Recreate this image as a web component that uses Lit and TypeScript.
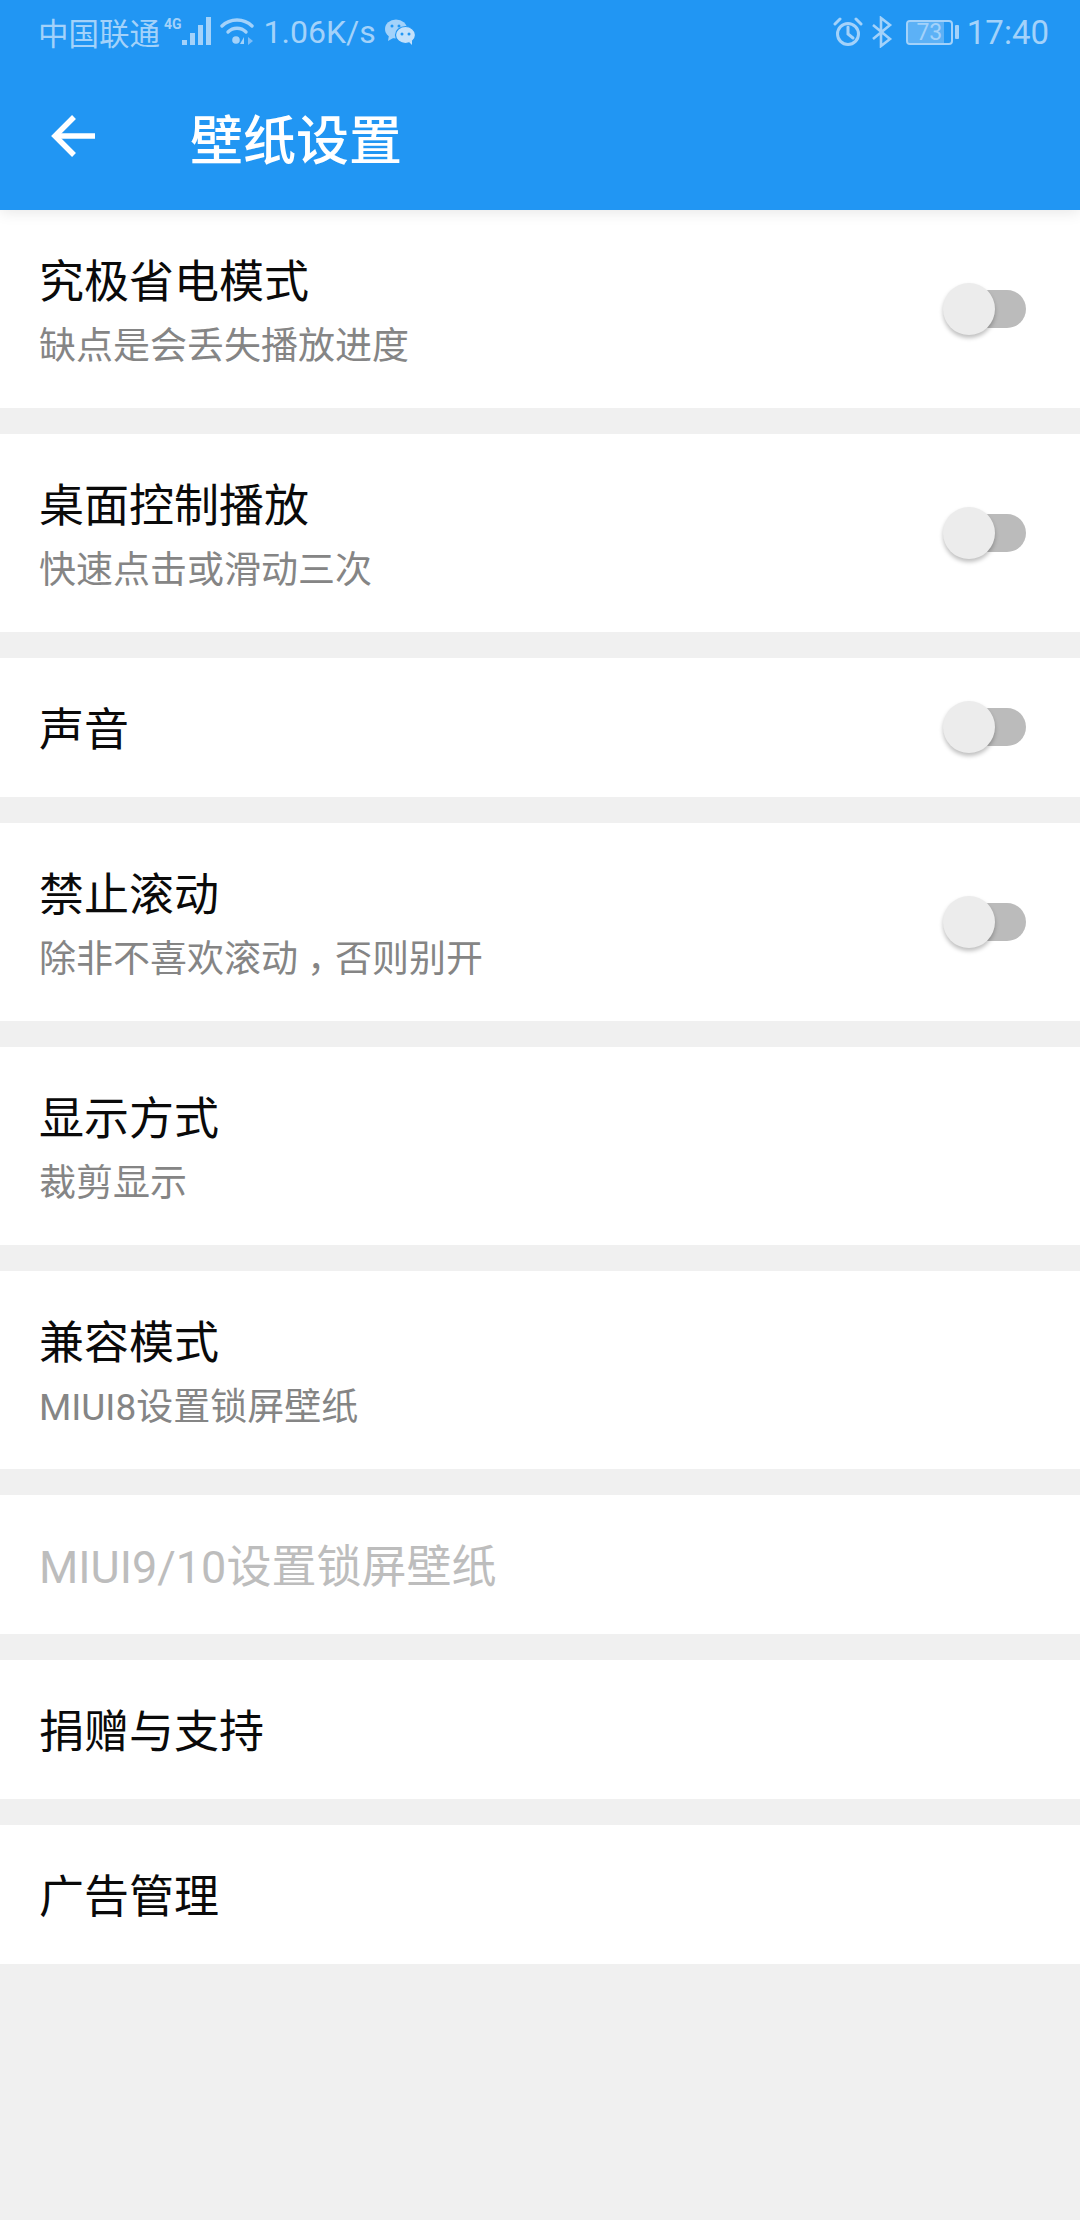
import { LitElement, html, css, svg } from 'lit';
import { customElement } from 'lit/decorators.js';

type Row = { title: string; sub?: unknown; toggle?: boolean; disabled?: boolean };

const ROWS: Row[] = [
  { title: '究极省电模式', sub: '缺点是会丢失播放进度', toggle: true },
  { title: '桌面控制播放', sub: '快速点击或滑动三次', toggle: true },
  { title: '声音', toggle: true },
  {
    title: '禁止滚动',
    // the comma sits further into its cell than the SC font puts it
    sub: html`除非不喜欢滚动<span class="comma">，</span>否则别开`,
    toggle: true,
  },
  { title: '显示方式', sub: '裁剪显示' },
  { title: '兼容模式', sub: 'MIUI8设置锁屏壁纸' },
  { title: 'MIUI9/10设置锁屏壁纸', disabled: true },
  { title: '捐赠与支持' },
  { title: '广告管理' },
];

@customElement('app-root')
export class AppRoot extends LitElement {
  static styles = css`
    :host {
      display: block;
      width: 1080px;
      height: 2220px;
      background: #f0f0f0;
      overflow: hidden;
      font-family: Roboto, 'Noto Sans CJK SC', sans-serif;
    }
    .header {
      position: relative;
      z-index: 1;
      height: 210px;
      background: #2196f3;
      box-shadow: 0 2px 14px rgba(0, 0, 0, 0.1);
    }
    .status {
      box-sizing: border-box;
      height: 66px;
      display: flex;
      align-items: center;
      padding: 0 31px 2px 38px;
      color: #a3d2fa;
      font-size: 30.5px;
    }
    .status svg {
      display: block;
      flex: none;
    }
    .spacer {
      flex: 1;
    }
    .net {
      align-self: flex-start;
      margin: 16px 0 0 4px;
      font-size: 14px;
      font-weight: 700;
      line-height: 16px;
    }
    .speed {
      margin: 0 9px 0 10px;
      font-size: 32px;
    }
    .battery {
      position: relative;
      width: 47px;
      height: 25px;
      margin: 0 2px 0 13px;
      border: 2px solid #a3d2fa;
      border-radius: 4px;
      box-sizing: border-box;
      font-size: 23px;
      line-height: 21px;
      text-align: center;
      overflow: hidden;
    }
    .battery-fill {
      position: absolute;
      left: 0;
      top: 0;
      bottom: 0;
      background: rgba(163, 210, 250, 0.45);
    }
    .battery-num {
      position: relative;
    }
    .battery-cap {
      width: 4px;
      height: 14px;
      background: #a3d2fa;
      border-radius: 1px;
    }
    .time {
      margin-left: 8px;
      font-size: 33px;
    }
    .toolbar {
      height: 144px;
      display: flex;
      align-items: center;
      padding-left: 51px;
    }
    .toolbar h1 {
      margin: 0 0 0 95px;
      color: #fff;
      font-size: 53px;
      font-weight: 500;
      line-height: 1;
      position: relative;
      top: 4px;
    }
    .back {
      position: relative;
      top: -2px;
    }
    .list {
      display: flex;
      flex-direction: column;
      gap: 26px;
    }
    .row {
      display: flex;
      align-items: center;
      justify-content: space-between;
      box-sizing: border-box;
      min-height: 139px;
      padding: 7px 54px 0 39px;
      background: #fff;
    }
    .row.tall {
      height: 198px;
    }
    .row.switchable .switch {
      top: -4px;
    }
    .title {
      color: #0a0a0a;
      font-size: 45px;
      line-height: 56px;
    }
    .sub {
      margin-top: 12px;
      color: #858585;
      font-size: 37px;
      line-height: 48px;
    }
    .comma {
      font-feature-settings: 'halt';
      margin: 0 9.5px 0 9px;
    }
    .disabled .title {
      color: #bdbdbd;
    }
    .switch {
      position: relative;
      width: 83px;
      height: 38px;
      display: block;
    }
    .track {
      position: absolute;
      left: 10px;
      right: 0;
      top: 0;
      bottom: 0;
      border-radius: 19px;
      background: #bbbbbb;
    }
    .thumb {
      position: absolute;
      left: 0;
      top: -7px;
      width: 52px;
      height: 52px;
      border-radius: 50%;
      background: #ececec;
      box-shadow: 0 3px 4px rgba(0, 0, 0, 0.25);
    }
  `;

  renderStatus() {
    return html`
      <div class="status">
        <span>中国联通</span>
        <span class="net">4G</span>
        ${svg`<svg width="30" height="30" viewBox="0 0 30 30" fill="#a3d2fa">
          <rect x="0" y="23" width="5" height="5"/>
          <rect x="8" y="16" width="5" height="12"/>
          <rect x="16" y="8" width="5" height="20"/>
          <rect x="24" y="0" width="5" height="28"/>
        </svg>`}
        ${svg`<svg width="34" height="30" viewBox="0 0 34 30" fill="none" stroke="#a3d2fa" stroke-width="3.4" stroke-linecap="round" style="margin-left:8px">
          <path d="M2 9 C10 1 24 1 32 9"/>
          <path d="M8 15 C13 10 21 10 26 15"/>
          <circle cx="16" cy="23" r="3.8" fill="#a3d2fa" stroke="none"/>
          <path d="M24 20 L24 27 L20 27 Z" fill="#a3d2fa" stroke="none"/>
          <path d="M28 20 L33 24 L28 28 Z" fill="#7dbdf8" stroke="none"/>
        </svg>`}
        <span class="speed">1.06K/s</span>
        ${svg`<svg width="31" height="26" viewBox="0 0 31 26">
          <ellipse cx="11" cy="10" rx="11" ry="9.5" fill="#a3d2fa"/>
          <path d="M4 16 L3 22 L10 18 Z" fill="#a3d2fa"/>
          <ellipse cx="20.5" cy="16" rx="10" ry="8.5" fill="#c3e1fb" stroke="#2196f3" stroke-width="1.2"/>
          <path d="M24 23 L27 26 L27 21 Z" fill="#c3e1fb"/>
          <circle cx="7" cy="7" r="1.5" fill="#2196f3"/>
          <circle cx="14" cy="7" r="1.5" fill="#2196f3"/>
          <circle cx="17" cy="15" r="1.5" fill="#2196f3"/>
          <circle cx="24" cy="15" r="1.5" fill="#2196f3"/>
        </svg>`}
        <span class="spacer"></span>
        ${svg`<svg width="30" height="30" viewBox="0 0 30 30" fill="none" stroke="#a3d2fa" stroke-width="3" stroke-linecap="round">
          <circle cx="15" cy="17" r="10.5"/>
          <path d="M15 10 V17 L20 21"/>
          <path d="M2 7 L7 2 M23 2 L28 7"/>
        </svg>`}
        ${svg`<svg width="22" height="32" viewBox="0 0 22 32" fill="none" stroke="#a3d2fa" stroke-width="2.6" style="margin-left:8px">
          <path d="M2 9 L19 23 L10 30 V2 L19 9 L2 23"/>
        </svg>`}
        <div class="battery">
          <div class="battery-fill" style="width:85%"></div>
          <span class="battery-num">73</span>
        </div>
        <div class="battery-cap"></div>
        <span class="time">17:40</span>
      </div>
    `;
  }

  renderRow(r: Row) {
    return html`
      <div class="row ${r.sub ? 'tall' : ''} ${r.toggle ? 'switchable' : ''} ${r.disabled ? 'disabled' : ''}">
        <div>
          <div class="title">${r.title}</div>
          ${r.sub ? html`<div class="sub">${r.sub}</div>` : ''}
        </div>
        ${r.toggle
          ? html`<span class="switch"><span class="track"></span><span class="thumb"></span></span>`
          : ''}
      </div>
    `;
  }

  render() {
    return html`
      <div class="header">
        ${this.renderStatus()}
        <div class="toolbar">
          ${svg`<svg class="back" width="44" height="44" viewBox="0 0 44 44" fill="none" stroke="#fff" stroke-width="5.5">
            <path d="M44 22 H4"/>
            <path d="M23 3 L4 22 L23 41"/>
          </svg>`}
          <h1>壁纸设置</h1>
        </div>
      </div>
      <div class="list">${ROWS.map((r) => this.renderRow(r))}</div>
    `;
  }
}
